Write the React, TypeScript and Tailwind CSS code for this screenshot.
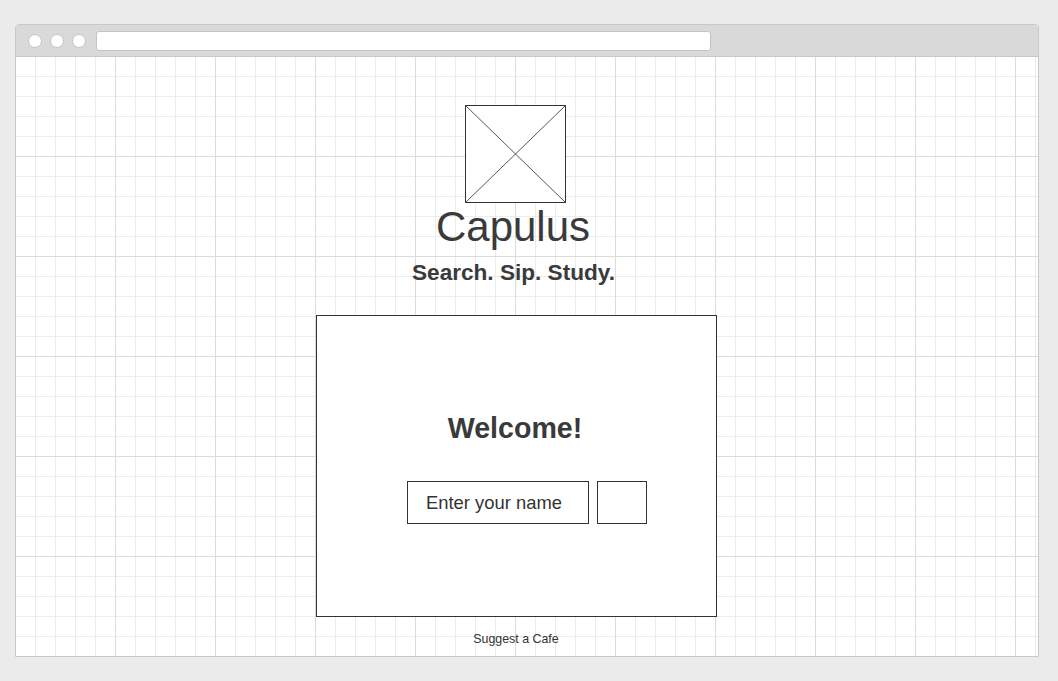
export default function App() {
  return (
    <div className="w-[1058px] h-[681px] bg-[#ebebeb] pt-[24px] pl-[15px] font-['Liberation_Sans',Arial,sans-serif] text-[#3a3a3a]">
      <div className="w-[1024px] h-[633px] flex flex-col border border-[#c8c8c8] rounded-t-[4px] overflow-hidden bg-white">
        <div className="h-[32px] shrink-0 bg-[#d9d9d9] border-b border-[#c8c8c8] flex items-center pl-[12px] gap-[8px]">
          <div className="w-[14px] h-[14px] rounded-full bg-white border border-[#c4c4c4]"></div>
          <div className="w-[14px] h-[14px] rounded-full bg-white border border-[#c4c4c4]"></div>
          <div className="w-[14px] h-[14px] rounded-full bg-white border border-[#c4c4c4]"></div>
          <div className="ml-[2px] w-[615px] h-[20px] bg-white rounded-[3px] border border-[#c4c4c4]"></div>
        </div>

        <div className="flex-1 flex flex-col items-center pt-[48px] pr-[22px] [background-image:linear-gradient(to_right,transparent_99px,#dcdcdc_99px),linear-gradient(to_bottom,transparent_99px,#dcdcdc_99px),linear-gradient(to_right,transparent_19px,#ececec_19px),linear-gradient(to_bottom,transparent_19px,#ececec_19px)] [background-size:100px_100px,100px_100px,20px_20px,20px_20px]">
          <svg width="101" height="98" viewBox="0 0 101 98" className="ml-[-2px]">
            <rect x="0.5" y="0.5" width="100" height="97" fill="#fff" stroke="#333" />
            <line x1="0.5" y1="0.5" x2="100.5" y2="97.5" stroke="#555" />
            <line x1="100.5" y1="0.5" x2="0.5" y2="97.5" stroke="#555" />
          </svg>
          <h1 className="text-[42px] leading-[48px] ml-[-6px]">Capulus</h1>
          <p className="mt-[9px] text-[22.6px] leading-[25px] font-bold ml-[-5px]">Search. Sip. Study.</p>

          <div className="mt-[30px] w-[401px] h-[302px] border border-[#333] bg-white flex flex-col items-center pt-[96px]">
            <h2 className="text-[28.6px] leading-[32px] font-bold ml-[-2px]">Welcome!</h2>
            <div className="mt-[37px] flex gap-[8px] ml-[22px]">
              <div className="w-[182px] h-[43px] border border-[#333] bg-white flex items-center pl-[18px] text-[18.4px] text-[#333]">
                Enter your name
              </div>
              <div className="w-[50px] h-[43px] border border-[#333] bg-white"></div>
            </div>
          </div>

          <p className="mt-[15px] text-[12.4px] leading-[14px] text-[#333]">Suggest a Cafe</p>
        </div>
      </div>
    </div>
  );
}
